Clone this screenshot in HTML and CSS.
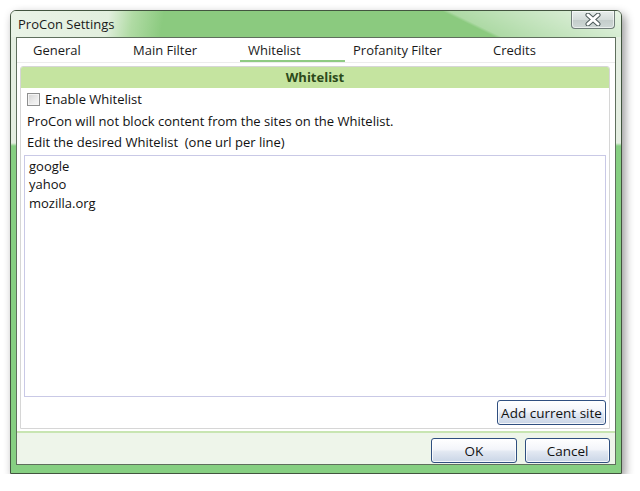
FILE: index.html
```html
<!DOCTYPE html>
<html>
<head>
<meta charset="utf-8">
<title>ProCon Settings</title>
<link rel="stylesheet" href="styles.css">
</head>
<body>
<div class="window">
  <div class="titlebar">
    <span class="title">ProCon Settings</span>
    <button class="close" aria-label="Close">
      <svg width="22" height="13" viewBox="0 0 22 13">
        <path d="M6 2 L16 11 M16 2 L6 11" stroke="#4d5a5a" stroke-width="5" stroke-linecap="round"/>
        <path d="M6 2 L16 11 M16 2 L6 11" stroke="#ffffff" stroke-width="3" stroke-linecap="round"/>
      </svg>
    </button>
  </div>
  <div class="client">
    <div class="tabs">
      <span class="tab t1">General</span>
      <span class="tab t2">Main Filter</span>
      <span class="tab t3 active">Whitelist</span>
      <span class="tab t4">Profanity Filter</span>
      <span class="tab t5">Credits</span>
    </div>
    <div class="panel">
      <div class="panel-head">Whitelist</div>
      <div class="panel-body">
        <label class="row check-row"><span class="checkbox"></span>Enable Whitelist</label>
        <div class="row">ProCon will not block content from the sites on the Whitelist.</div>
        <div class="row">Edit the desired Whitelist&nbsp; (one url per line)</div>
        <div class="list">
          <div>google</div>
          <div>yahoo</div>
          <div>mozilla.org</div>
        </div>
        <div class="list-actions">
          <button class="btn add">Add current site</button>
        </div>
      </div>
    </div>
    <div class="footer">
      <button class="btn ok">OK</button>
      <button class="btn cancel">Cancel</button>
    </div>
  </div>
</div>
</body>
</html>
```
FILE: styles.css
```css
html, body {
  margin: 0;
  background: #ffffff;
}
body {
  padding: 10px 0 0 10px;
  font-family: "Open Sans", "Noto Sans", sans-serif;
  font-size: 13px;
  color: #111;
}
.window {
  width: 612px;
  height: 464px;
  box-sizing: border-box;
  border: 1px solid #42543f;
  border-radius: 6px 6px 0 0;
  padding: 0 5px 8px 5px;
  display: flex;
  flex-direction: column;
  background: linear-gradient(to bottom, #e4eee1 0, #e4eee1 132px, #86cf82 135px, #86cf82 100%);
  box-shadow: 3px 4px 10px rgba(0, 0, 0, 0.42);
}
.titlebar {
  height: 26px;
  margin: 0 -5px;
  padding: 0 6px 0 7px;
  display: flex;
  justify-content: space-between;
  align-items: flex-start;
  border-radius: 5px 5px 0 0;
  background:
    linear-gradient(26deg, rgba(255,255,255,0) 0, rgba(255,255,255,0) 73%, rgba(255,255,255,0.3) 74%, rgba(255,255,255,0.8) 100%),
    linear-gradient(100deg, #eaf3e7 0, #e2efde 16%, #b0dba4 20%, #8bca7f 25%, #8bca7f 100%);
}
.title {
  line-height: 26px;
  color: #1a1a1a;
  font-size: 13px;
}
.close {
  margin: 0;
  width: 44px;
  height: 18px;
  padding: 0;
  border: 1px solid #6f7c78;
  border-top: none;
  border-radius: 0 0 4px 4px;
  background: linear-gradient(to bottom, #e8eeec 0, #d4dcda 50%, #c3ccca 51%, #cfd8d6 100%);
  box-shadow: inset 0 0 0 1px rgba(255,255,255,0.6);
  display: flex;
  align-items: center;
  justify-content: center;
}
.client {
  flex: 1;
  display: flex;
  flex-direction: column;
  background: #ffffff;
  border: 1px solid #5f6f5d;
}
.tabs {
  height: 24px;
  display: flex;
  padding-left: 8px;
  border-bottom: 1px solid #ececec;
}
.tab {
  box-sizing: border-box;
  padding-left: 8px;
  padding-top: 2px;
  line-height: 20px;
  color: #1a1a1a;
}
.t1 { width: 100px; }
.t2 { width: 115px; }
.t3 { width: 105px; }
.t4 { width: 140px; }
.t5 { width: 80px; }
.tab.active {
  border-bottom: 2px solid #8fcb84;
}
.panel {
  flex: 1;
  margin: 3px 5px 2px 3px;
  border: 1px solid #d6d6d6;
  border-radius: 3px 3px 0 0;
  display: flex;
  flex-direction: column;
}
.panel-head {
  height: 21px;
  line-height: 21px;
  background: #c5e4a0;
  text-align: center;
  font-weight: bold;
  color: #2c4a1a;
  border-radius: 2px 2px 0 0;
}
.panel-body {
  flex: 1;
  display: flex;
  flex-direction: column;
  padding: 1px 3px 3px 3px;
}
.row {
  height: 21.5px;
  line-height: 21.5px;
  padding-left: 3px;
  white-space: nowrap;
}
.check-row {
  display: flex;
  align-items: center;
  gap: 5px;
}
.checkbox {
  width: 11px;
  height: 11px;
  border: 1px solid #8e8f8f;
  background: linear-gradient(135deg, #d3d3d3 0, #ececec 60%, #f6f6f6 100%);
  box-shadow: inset 0 0 0 1px #f4f4f4;
}
.list {
  flex: 1;
  margin-top: 1.5px;
  border: 1px solid #c9c9e6;
  padding: 1px 4px;
  line-height: 18.4px;
}
.list-actions {
  display: flex;
  justify-content: flex-end;
  margin-top: 3px;
}
.btn {
  height: 25px;
  box-sizing: border-box;
  border: 1px solid #2f4f80;
  border-radius: 3px;
  background: linear-gradient(to bottom, #ffffff 0, #f3f5fa 45%, #e2e8f2 55%, #c9d5e6 100%);
  box-shadow: inset 0 0 0 1px rgba(255,255,255,0.8);
  font-family: "Open Sans", "Noto Sans", sans-serif;
  font-size: 13.5px;
  color: #111;
  padding: 0;
  margin: 0;
}
.add { width: 109px; }
.footer {
  height: 33px;
  box-sizing: border-box;
  border-top: 2px solid #c8e5b2;
  background: #eef5ea;
  display: flex;
  justify-content: flex-end;
  align-items: flex-start;
  gap: 8px;
  padding: 5px 5px 0 0;
}
.ok { width: 86px; }
.cancel { width: 85px; }
```
